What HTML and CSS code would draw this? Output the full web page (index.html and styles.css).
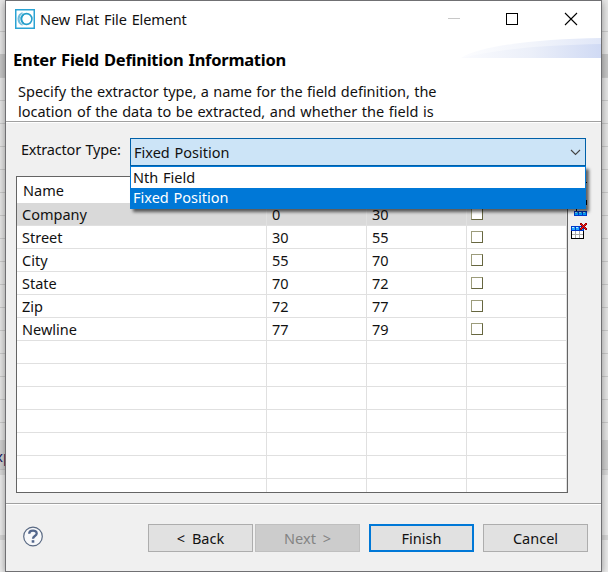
FILE: index.html
```html
<!DOCTYPE html>
<html lang="en">
<head>
<meta charset="utf-8">
<title>New Flat File Element</title>
<link rel="stylesheet" href="styles.css">
</head>
<body>
<div class="desktop">
  <div class="behind"><span class="behind-text">xp</span></div>
  <main class="dialog">
    <header class="banner">
      <div class="titlebar">
        <svg class="app-icon" width="20" height="20" viewBox="0 0 20 20"><rect x=".75" y=".75" width="18.5" height="18.5" fill="#fff" stroke="#2aa3d4" stroke-width="1.5"/><path d="M8 4C2 4 1 15 8 16M7 4C3 7 3 13 7 16" fill="none" stroke="#70bddd" stroke-width="1.2"/><circle cx="11.5" cy="10" r="5.4" fill="none" stroke="#269fcb" stroke-width="1.6"/><path d="M9 5C6 8 6 12 9 15" fill="none" stroke="#269fcb" stroke-width="1.5"/></svg>
        <span class="title">New Flat File Element</span>
        <svg class="controls" width="131" height="14" viewBox="0 0 131 14" shape-rendering="crispEdges"><path d="M0 6.5h12" stroke="#c8c8c8"/><rect x="58.5" y="1.5" width="11" height="11" fill="none" stroke="#000"/><path d="M117 1l12 12M129 1l-12 12" stroke="#000" stroke-width="1.1" shape-rendering="auto"/></svg>
      </div>
      <svg class="swoosh" width="140" height="20" viewBox="0 0 140 20"><defs><linearGradient id="sw"><stop offset="0" stop-color="#fafbfe"/><stop offset=".5" stop-color="#ebeff9"/><stop offset="1" stop-color="#d0daf4"/></linearGradient></defs><path d="M0 20C18 8 75 1 140 0v20z" fill="url(#sw)" opacity=".65"/><path d="M0 20C40 10 90 7 140 6v14z" fill="url(#sw)"/></svg>
      <h1 class="heading">Enter Field Definition Information</h1>
      <p class="description"><span class="line first">Specify the extractor type, a name for the field definition, the</span><span class="line second">location of the data to be extracted, and whether the field is</span></p>
    </header>
    <section class="content">
      <div class="field">
        <label class="field-label">Extractor Type:</label>
        <div class="combo"><span>Fixed Position</span><svg width="11" height="7" viewBox="0 0 11 7"><path d="M1 1l4.5 4.5L10 1" fill="none" stroke="#444" stroke-width="1.1"/></svg>
          <div class="options"><div class="option">Nth Field</div><div class="option chosen">Fixed Position</div></div>
        </div>
      </div>
      <div class="table-area">
        <div class="table">
          <div class="row head"><span>Name</span><span></span><span></span><span></span></div>
          <div class="row selected"><span>Company</span><span>0</span><span>30</span><span><i class="check"></i></span></div>
          <div class="row"><span>Street</span><span>30</span><span>55</span><span><i class="check"></i></span></div>
          <div class="row"><span>City</span><span>55</span><span>70</span><span><i class="check"></i></span></div>
          <div class="row"><span>State</span><span>70</span><span>72</span><span><i class="check"></i></span></div>
          <div class="row"><span>Zip</span><span>72</span><span>77</span><span><i class="check"></i></span></div>
          <div class="row"><span>Newline</span><span>77</span><span>79</span><span><i class="check"></i></span></div>
          <div class="row"><span></span><span></span><span></span><span></span></div>
          <div class="row"><span></span><span></span><span></span><span></span></div>
          <div class="row"><span></span><span></span><span></span><span></span></div>
          <div class="row"><span></span><span></span><span></span><span></span></div>
          <div class="row"><span></span><span></span><span></span><span></span></div>
          <div class="row"><span></span><span></span><span></span><span></span></div>
          <div class="row"><span></span><span></span><span></span><span></span></div>
        </div>
        <div class="tools">
          <svg width="17" height="37" viewBox="0 0 17 37" shape-rendering="crispEdges"><path d="M15 0h1v1h-1zM15 18h1v5h-1zM3 25h5v1H6v3H5v-2H4v-1H3z" fill="#000"/><rect x="3" y="29" width="13" height="5" fill="#0038c8"/><path d="M4 30h3v3H4zM8 30h3v3H8zM12 30h3v3h-3z" fill="#00a0ff"/><path d="M4 30h2v1H4zM8 30h2v1H8zM12 30h2v1h-2z" fill="#9ce4ff"/></svg>
          <svg width="17" height="16" viewBox="0 0 17 16" shape-rendering="crispEdges"><rect x=".5" y="3.5" width="12" height="12" fill="#fff" stroke="#000"/><path d="M1 11.5h11M4.5 8v7M8.5 8v7" stroke="#aaa"/><rect x="0" y="3" width="13" height="5" fill="#0038c8"/><path d="M1 4h3v3H1zM5 4h3v3H5zM9 4h3v3H9z" fill="#20a8ff"/><path d="M1 4h2v1H1zM5 4h2v1H5zM9 4h2v1H9z" fill="#b4ebff"/><path d="M9 0h2v1h1v1h1V1h1V0h2v2h-1v1h-1v1h1v1h1v2h-2V6h-1V5h-1v1h-1v1H9V5h1V4h1V3h-1V2H9z" fill="#a00000"/><path d="M10 1h1v1h1v1h1V2h1V1h1v1h-1v1h-1v1h1v1h1v1h-1V5h-1V4h-1v1h-1v1h-1V5h1V4h1V3h-1V2h-1z" fill="#ee1c1c"/></svg>
        </div>
      </div>
    </section>
    <footer class="footer">
      <svg class="help" width="21" height="21" viewBox="0 0 21 21"><circle cx="10" cy="10.5" r="9.3" fill="#f7f8fa" stroke="#596983" stroke-width="1.2"/><path d="M6.2 7.7C6.200 3.500 13.700 3.600 13.700 7.400c0 2.600-3.700 2.700-3.700 5.300" fill="none" stroke="#52668c" stroke-width="2.3"/><rect x="8.700" y="14.200" width="2.600" height="2.500" fill="#52668c"/></svg>
      <button class="button back">&lt; Back</button>
      <button class="button next" disabled>Next &gt;</button>
      <button class="button finish">Finish</button>
      <button class="button cancel">Cancel</button>
    </footer>
  </main>
</div>
</body>
</html>
```
FILE: styles.css
```css
* { box-sizing: border-box; }
body { margin: 0; font: 15px/20px "Noto Sans", "Open Sans", sans-serif; color: #111; }
.desktop { position: relative; width: 608px; height: 572px; padding-left: 5px; overflow: hidden; background: #e8e8e8; }
.behind { position: absolute; inset: 0; background: linear-gradient(transparent 54px, #c8c8c8 54px 77px, transparent 77px 440px, #d2d2d2 440px 469px, #c4c4c4 469px 470px, #dcdcdc 470px 475px, #eee 475px 535px, #d8d8d8 535px 540px, #eee 540px), repeating-linear-gradient(#e8e8e8 0 22px, #ccc 22px 23px); background-position: 0 0, 0 9px; }
.behind-text { position: absolute; left: -5px; top: 446px; color: #16165f; }
.dialog { position: relative; width: 597px; height: 572px; border: 1px solid #707073; background: #f0f0f0; box-shadow: 0 2px 8px rgba(0,0,0,.4); display: flex; flex-direction: column; }
.banner { position: relative; height: 121px; flex: none; background: #fff; border-bottom: 1px solid #a0a0a0; overflow: hidden; }
.titlebar { display: flex; align-items: center; height: 36px; padding-left: 9px; }
.title { flex: 1; margin-left: 5px; font-size: 14.5px; letter-spacing: -.12px; word-spacing: 1.3px; white-space: nowrap; }
.controls { margin-right: 22px; }
.swoosh { position: absolute; right: 0; top: 37px; }
.heading { position: relative; margin: 12px 0 0 7px; font-size: 16.5px; line-height: 22px; font-weight: 700; letter-spacing: -.26px; word-spacing: 1px; white-space: nowrap; color: #000; }
.description { margin: 10px 0 0 12px; font-size: 14.5px; line-height: 20px; }
.line { display: block; white-space: nowrap; }
.first { word-spacing: .5px; }
.second { word-spacing: .8px; }
.content { height: 381px; flex: none; padding: 15px 0 0 10px; border-top: 1px solid #fff; }
.field { display: flex; height: 38px; }
.field-label { width: 114px; padding: 1px 0 0 5px; font-size: 14.5px; letter-spacing: -.2px; word-spacing: 1px; white-space: nowrap; }
.combo { position: relative; flex: none; width: 456px; height: 28px; border: 1px solid #0060a8; background: #cce4f7; display: flex; align-items: center; justify-content: space-between; padding: 0 4px 0 3px; font-size: 14.5px; word-spacing: 1px; }
.options { position: absolute; z-index: 2; left: -1px; top: 27px; width: 456px; height: 43px; padding-top: 1px; border: 1px solid #0078d7; background: #fff; box-shadow: 3px 3px 3px rgba(0,0,0,.6); }
.option { height: 20px; padding-left: 2px; line-height: 18px; }
.chosen { height: 21px; line-height: 19px; background: #0078d7; color: #fff; }
.table-area { display: flex; }
.table { width: 552px; height: 317px; flex: none; overflow: hidden; border: 1px solid #646464; background: #fff; }
.row { display: grid; grid-template-columns: 250px 100px 100px 100px; height: 23px; border-bottom: 1px solid #e0e0e0; font-size: 14.5px; line-height: 22px; }
.row span { padding-left: 5px; border-right: 1px solid #e0e0e0; }
.row.head { height: 26px; border-bottom: 0; line-height: 27px; }
.row.head span { padding-left: 6px; }
.row.selected { background: #d9d9d9; }
.check { display: block; width: 12px; height: 12px; margin: 5px 0 0 -1px; background: #fff; border: 1px solid #66663f; border-top-color: #9c9c7b; border-left-color: #9c9c7b; }
.tools { display: flex; flex-direction: column; margin-left: 3px; padding-top: 6px; gap: 4px; }
.footer { height: 68px; flex: none; display: flex; border-top: 1px solid #a0a0a0; box-shadow: inset 0 1px #fff; padding: 20px 13px 0 17px; }
.help { margin-top: 2px; }
.button { width: 105px; height: 28px; padding: 0 0 1px; border: 1px solid #adadad; background: #e1e1e1; font: inherit; font-size: 14.5px; word-spacing: 3px; color: #111; }
.back { margin-left: 104px; }
.next { margin-left: 2px; color: #838383; background: #ccc; border-color: #bfbfbf; }
.finish { margin-left: 9px; border: 2px solid #0078d7; }
.cancel { margin-left: 9px; }
```
